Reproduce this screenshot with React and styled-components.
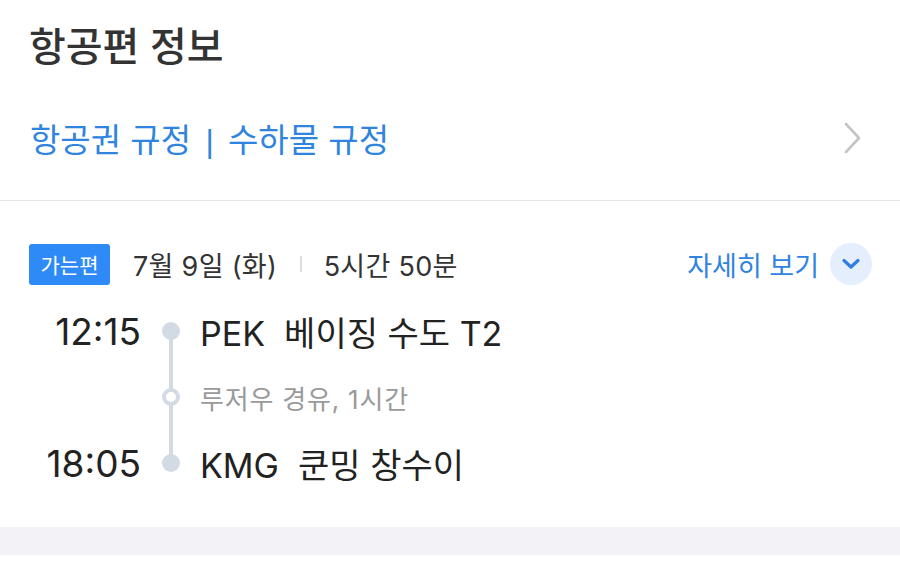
import React from "react";
import styled, { createGlobalStyle } from "styled-components";

const Global = createGlobalStyle`
  html, body { margin: 0; padding: 0; background: #ffffff; }
  body { font-family: "Inter", "Noto Sans CJK KR", sans-serif; -webkit-font-smoothing: antialiased; }
`;

const Page = styled.div`
  width: 900px;
  background: #fff;
`;

const InfoSection = styled.section`
  height: 200px;
  border-bottom: 1px solid #e6e6e6;
  display: flex;
  flex-direction: column;
`;

const Title = styled.h1`
  margin: 0;
  height: 88px;
  display: flex;
  align-items: center;
  padding-left: 29px;
  font-size: 40px;
  font-weight: 500;
  color: #333;
`;

const LinkRow = styled.div`
  height: 100px;
  display: flex;
  align-items: center;
  justify-content: space-between;
  padding: 0 38px 0 30px;
`;

const LinkText = styled.span`
  font-size: 33px;
  color: #2f84e0;
  white-space: pre;
`;

const Bar = styled.span`
  font-family: "Liberation Sans", sans-serif;
  font-size: 32px;
  margin: 0 5px;
`;

const FlightSection = styled.section`
  padding-top: 42px;
  height: 326px;
  box-sizing: border-box;
`;

const HeadRow = styled.div`
  display: flex;
  align-items: center;
  height: 42px;
  padding: 0 28px 0 29px;
`;

const Tag = styled.span`
  width: 81px;
  height: 41px;
  border-radius: 3px;
  background: #2e8af6;
  color: #fff;
  font-size: 21px;
  display: flex;
  align-items: center;
  justify-content: center;
`;

const HeadText = styled.span`
  font-size: 27px;
  color: #333;
  letter-spacing: 0.3px;
  margin-left: ${(p) => p.$ml || 0}px;
`;

const Sep = styled.span`
  width: 1.5px;
  height: 16px;
  background: #dddddd;
  margin-left: 23px;
  margin-right: 22px;
`;

const Spacer = styled.div`
  flex: 1;
`;

const Detail = styled.span`
  font-size: 27px;
  color: #2f84e0;
  margin-right: 11px;
`;

const CircleBtn = styled.span`
  width: 42px;
  height: 42px;
  border-radius: 50%;
  background: #e4eefc;
  display: flex;
  align-items: center;
  justify-content: center;
`;

const Timeline = styled.div`
  margin-top: 13px;
  display: grid;
  grid-template-columns: 141px 59px 1fr;
  grid-auto-rows: 66px;
`;

const Time = styled.div`
  display: flex;
  align-items: center;
  justify-content: flex-end;
  font-size: 37px;
  color: #222;
`;

const Rail = styled.div`
  position: relative;
  &::before {
    content: "";
    position: absolute;
    left: 28px;
    width: 4px;
    background: #d2dbe3;
    top: ${(p) => (p.$pos === "first" ? "50%" : "0")};
    bottom: ${(p) => (p.$pos === "last" ? "50%" : "0")};
  }
  &::after {
    content: "";
    position: absolute;
    left: 30px;
    top: 50%;
    width: ${(p) => (p.$hollow ? "10px" : "18px")};
    height: ${(p) => (p.$hollow ? "10px" : "18px")};
    transform: translate(-50%, -50%);
    border-radius: 50%;
    background: ${(p) => (p.$hollow ? "#fff" : "#d2dbe3")};
    border: ${(p) => (p.$hollow ? "4px solid #d2dbe3" : "none")};
  }
`;

const Station = styled.div`
  display: flex;
  align-items: center;
  font-size: 34px;
  color: #222;
  white-space: pre;
`;

const Stop = styled.div`
  display: flex;
  align-items: center;
  font-size: 26px;
  color: #9a9a9a;
  letter-spacing: 0.8px;
`;

const Band = styled.div`
  height: 28px;
  background: #f3f3f7;
`;

const Chevron = () => (
  <svg width="18" height="32" viewBox="0 0 18 32" fill="none">
    <path d="M2 2 L15 16 L2 30" stroke="#c4c4c4" strokeWidth="2.6" strokeLinecap="round" strokeLinejoin="round" />
  </svg>
);

const ChevronDown = () => (
  <svg width="20" height="12" viewBox="0 0 20 12" fill="none">
    <path d="M3 2.5 L10 9 L17 2.5" stroke="#2f7fe0" strokeWidth="3.2" strokeLinecap="round" strokeLinejoin="round" />
  </svg>
);

export default function App() {
  return (
    <Page>
      <Global />
      <InfoSection>
        <Title>항공편 정보</Title>
        <LinkRow>
          <LinkText>
            {"항공권 규정 "}
            <Bar>|</Bar>
            {" 수하물 규정"}
          </LinkText>
          <Chevron />
        </LinkRow>
      </InfoSection>
      <FlightSection>
        <HeadRow>
          <Tag>가는편</Tag>
          <HeadText $ml={23}>7월 9일 (화)</HeadText>
          <Sep />
          <HeadText>5시간 50분</HeadText>
          <Spacer />
          <Detail>자세히 보기</Detail>
          <CircleBtn>
            <ChevronDown />
          </CircleBtn>
        </HeadRow>
        <Timeline>
          <Time>12:15</Time>
          <Rail $pos="first" />
          <Station>{"PEK  베이징 수도 T2"}</Station>
          <div />
          <Rail $hollow />
          <Stop>루저우 경유, 1시간</Stop>
          <Time>18:05</Time>
          <Rail $pos="last" />
          <Station>{"KMG  쿤밍 창수이"}</Station>
        </Timeline>
      </FlightSection>
      <Band />
    </Page>
  );
}
